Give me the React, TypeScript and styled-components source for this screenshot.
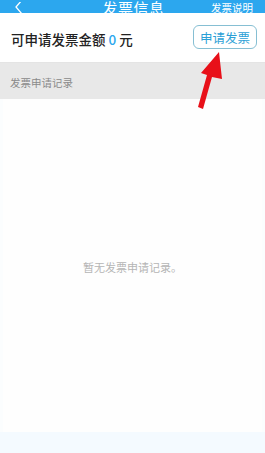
import styled, { createGlobalStyle } from "styled-components";

const GlobalStyle = createGlobalStyle`
  html, body {
    margin: 0;
    padding: 0;
    background: #ffffff;
    font-family: "Noto Sans CJK SC", "Noto Sans", sans-serif;
  }
`;

const App = () => {
  return (
    <Page>
      <GlobalStyle />
      <Header>
        <Back>
          <svg width="10" height="14" viewBox="0 0 10 14">
            <path d="M8 -2 L2 5 L8 12" fill="none" stroke="#ffffff" strokeWidth="1.3" />
          </svg>
        </Back>
        <Title>发票信息</Title>
        <HeadLink>发票说明</HeadLink>
      </Header>
      <AmountRow>
        <Amount>
          可申请发票金额 <Num>0</Num> 元
        </Amount>
        <ApplyButton>申请发票</ApplyButton>
      </AmountRow>
      <Section>发票申请记录</Section>
      <Content>
        <Empty>暂无发票申请记录。</Empty>
      </Content>
      <Footer />
      <Arrow width="40" height="62" viewBox="0 0 40 62">
        <path d="M26 0 L8 21 L14 23 L5 55 L10 57 L19 25 L29 27 Z" fill="#e81019" />
      </Arrow>
    </Page>
  );
};

export default App;

const Page = styled.div`
  position: relative;
  width: 265px;
  height: 453px;
  overflow: hidden;
  display: flex;
  flex-direction: column;
  background: #ffffff;
`;

const Header = styled.div`
  height: 13px;
  background: #2ca7ee;
  overflow: hidden;
  display: grid;
  grid-template-columns: 1fr auto 1fr;
  align-items: end;
  padding: 0 12px 0 14px;
  color: #ffffff;
`;

const Back = styled.div`
  display: flex;
  align-items: flex-end;
  height: 13px;
  svg {
    display: block;
  }
`;

const Title = styled.div`
  font-size: 15px;
  line-height: 15px;
  margin-bottom: 1px;
  letter-spacing: 0.5px;
`;

const HeadLink = styled.div`
  justify-self: end;
  font-size: 10.5px;
  line-height: 11px;
  margin-bottom: 3px;
`;

const AmountRow = styled.div`
  height: 49px;
  display: flex;
  align-items: center;
  justify-content: space-between;
  padding: 0 8px 0 11px;
  border-bottom: 1px solid #e4e4e4;
`;

const Amount = styled.div`
  font-size: 13.5px;
  font-weight: 500;
  color: #222222;
  padding-top: 2px;
`;

const Num = styled.span`
  color: #2ca7ee;
`;

const ApplyButton = styled.div`
  width: 62px;
  height: 22px;
  border: 1px solid #86bfd3;
  border-radius: 6px;
  display: flex;
  align-items: center;
  justify-content: center;
  font-size: 12.5px;
  color: #2b9fd6;
  margin-top: -1px;
`;

const Section = styled.div`
  height: 36px;
  background: #e8e8e8;
  display: flex;
  align-items: flex-end;
  padding: 0 0 9px 10px;
  box-sizing: border-box;
  font-size: 10.5px;
  color: #8a8a8a;
`;

const Content = styled.div`
  flex: 1;
  display: flex;
  align-items: center;
  justify-content: center;
  border-left: 3px solid #fbfdfe;
  border-right: 3px solid #fbfdfe;
  background: #fefefe;
`;

const Empty = styled.div`
  font-size: 11px;
  color: #b5b5b5;
  margin-top: 2px;
`;

const Footer = styled.div`
  height: 21px;
  background: #f4faff;
`;

const Arrow = styled.svg`
  position: absolute;
  left: 193px;
  top: 52px;
`;
